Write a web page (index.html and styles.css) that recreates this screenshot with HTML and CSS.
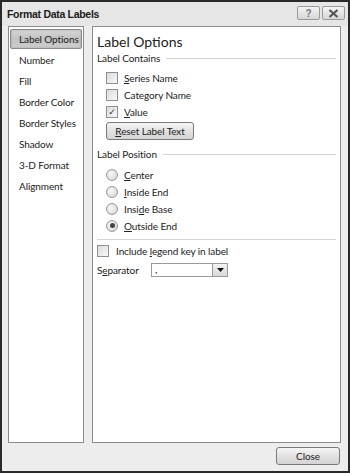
FILE: index.html
```html
<!DOCTYPE html>
<html>
    <head>
        <meta charset="UTF-8">
        <title>Format Data Labels</title>
        <link rel="stylesheet" href="styles.css">
    </head>
    <body>
        <div class="dialog">
            <div class="titlebar">
                <span class="title">Format Data Labels</span>
                <div class="title-buttons">
                    <span class="tbtn help">?</span>
                    <span class="tbtn close-x">
                        <svg width="11" height="9" viewBox="0 0 11 9"><path d="M1.5 1 L9.5 8 M9.5 1 L1.5 8" stroke="#555" stroke-width="2.2"/></svg>
                    </span>
                </div>
            </div>
            <div class="main">
                <ul class="nav">
                    <li class="selected">Label Options</li>
                    <li>Number</li>
                    <li>Fill</li>
                    <li>Border Color</li>
                    <li>Border Styles</li>
                    <li>Shadow</li>
                    <li>3-D Format</li>
                    <li>Alignment</li>
                </ul>
                <div class="panel">
                    <h2>Label Options</h2>
                    <div class="group-head"><span>Label Contains</span></div>
                    <div class="opts">
                        <label class="row"><span class="check"></span><span><u>S</u>eries Name</span></label>
                        <label class="row"><span class="check"></span><span>Category Name</span></label>
                        <label class="row"><span class="check checked">&#10003;</span><span><u>V</u>alue</span></label>
                        <button class="btn reset"><u>R</u>eset Label Text</button>
                    </div>
                    <div class="group-head"><span>Label Position</span></div>
                    <div class="opts radios">
                        <label class="row"><span class="radio"></span><span><u>C</u>enter</span></label>
                        <label class="row"><span class="radio"></span><span><u>I</u>nside End</span></label>
                        <label class="row"><span class="radio"></span><span>Insi<u>d</u>e Base</span></label>
                        <label class="row"><span class="radio on"></span><span><u>O</u>utside End</span></label>
                    </div>
                    <div class="divider"></div>
                    <label class="row legend"><span class="check"></span><span>Include <u>l</u>egend key in label</span></label>
                    <div class="sep-row">
                        <span class="sep-label">S<u>e</u>parator</span>
                        <div class="combo">
                            <span class="combo-val">,</span>
                            <span class="combo-btn"><svg width="7" height="4" viewBox="0 0 7 4"><path d="M0 0 H7 L3.5 4 Z" fill="#111"/></svg></span>
                        </div>
                    </div>
                </div>
            </div>
            <div class="footer">
                <button class="btn close">Close</button>
            </div>
        </div>
    </body>
</html>
```

FILE: styles.css
```css
body {
    margin: 0;
    font-family: Lato, 'Liberation Sans', Arial, sans-serif;
    font-size: 10px;
    letter-spacing: -0.1px;
    color: #222;
    background: #fff;
}
.dialog {
    width: 350px;
    height: 473px;
    box-sizing: border-box;
    border: 2px solid #2a2a2a;
    background: #ededed;
    display: flex;
    flex-direction: column;
}
.titlebar {
    height: 24px;
    display: flex;
    align-items: center;
    justify-content: space-between;
    padding: 0 3px 0 5px;
    background: #e6e6e6;
}
.title {
    font-family: 'Liberation Sans', Arial, sans-serif;
    font-weight: 700;
    font-size: 10.5px;
    letter-spacing: -0.3px;
    color: #1a1a1a;
}
.title-buttons {
    display: flex;
    gap: 2px;
    margin-top: -2px;
}
.tbtn {
    width: 21px;
    height: 12px;
    border: 1px solid #9a9a9a;
    border-radius: 2px;
    background: linear-gradient(#f4f4f4, #d6d6d6);
    display: flex;
    align-items: center;
    justify-content: center;
    font-family: 'Liberation Sans', Arial, sans-serif;
    font-size: 10px;
    font-weight: 700;
    color: #777;
}
.main {
    display: flex;
    height: 417px;
    padding: 0 7px 0 6px;
    gap: 8px;
}
.nav {
    list-style: none;
    margin: 0;
    padding: 2px 1px 1px;
    width: 76px;
    box-sizing: border-box;
    background: #fff;
    border: 1px solid #8c8c8c;
}
.nav li {
    height: 20px;
    line-height: 20px;
    margin-bottom: 1px;
    padding-left: 9px;
    white-space: nowrap;
    box-sizing: border-box;
}
.nav li.selected {
    border: 1px solid #8a8a8a;
    border-radius: 2px;
    line-height: 18px;
    padding-left: 8px;
    background: linear-gradient(#d6d6d6, #c2c2c2 50%, #cecece);
    box-shadow: inset 0 0 2px #9a9a9a;
}
.panel {
    flex: 1;
    background: #fff;
    border: 1px solid #8c8c8c;
    padding: 5px 4px 0 4px;
}
h2 {
    margin: 0;
    font-size: 14px;
    font-weight: 400;
    line-height: 19px;
    letter-spacing: 0;
    color: #222;
}
.group-head {
    display: flex;
    align-items: center;
    height: 14px;
    gap: 6px;
}
.group-head::after {
    content: "";
    flex: 1;
    border-top: 1px solid #d4d4d4;
}
.opts {
    padding-left: 9px;
    margin: 4px 0 7px;
}
.radios {
    margin: 5px 0 5px;
}
.row {
    display: flex;
    align-items: center;
    gap: 6px;
    height: 17px;
}
.check {
    width: 10px;
    height: 10px;
    border: 1px solid #8f8f8f;
    background: linear-gradient(135deg, #dcdcdc, #f8f8f8);
    font-family: 'DejaVu Sans', sans-serif;
    font-size: 9px;
    line-height: 10px;
    text-align: center;
    color: #333;
}
.radio {
    width: 10px;
    height: 10px;
    border: 1px solid #9a9a9a;
    border-radius: 50%;
    background: radial-gradient(circle at 40% 40%, #fafafa, #d0d0d0);
    position: relative;
}
.radio.on::after {
    content: "";
    position: absolute;
    left: 2.5px;
    top: 2.5px;
    width: 5px;
    height: 5px;
    border-radius: 50%;
    background: #444;
}
.btn {
    font-family: inherit;
    font-size: 10px;
    letter-spacing: -0.1px;
    color: #222;
    border: 1px solid #7a7a7a;
    border-radius: 3px;
    background: linear-gradient(#f6f6f6, #e2e2e2 50%, #d4d4d4);
    padding: 0;
}
.reset {
    width: 88px;
    height: 18px;
    margin-top: 2px;
}
.divider {
    border-top: 1px solid #d4d4d4;
}
.legend {
    margin-top: 2px;
    gap: 7px;
}
.sep-row {
    display: flex;
    align-items: center;
    height: 18px;
    margin-top: 2px;
}
.sep-label {
    width: 54px;
}
.combo {
    width: 77px;
    height: 14px;
    border: 1px solid #9a9a9a;
    display: flex;
    justify-content: space-between;
    box-sizing: border-box;
}
.combo-val {
    padding-left: 3px;
    line-height: 11px;
}
.combo-btn {
    width: 14px;
    border-left: 1px solid #9a9a9a;
    background: linear-gradient(#f4f4f4, #d8d8d8);
    display: flex;
    align-items: center;
    justify-content: center;
}
.footer {
    flex: 1;
    display: flex;
    justify-content: flex-end;
    align-items: flex-start;
    padding: 4px 8px 0 0;
}
.close {
    width: 64px;
    height: 18px;
}
```
